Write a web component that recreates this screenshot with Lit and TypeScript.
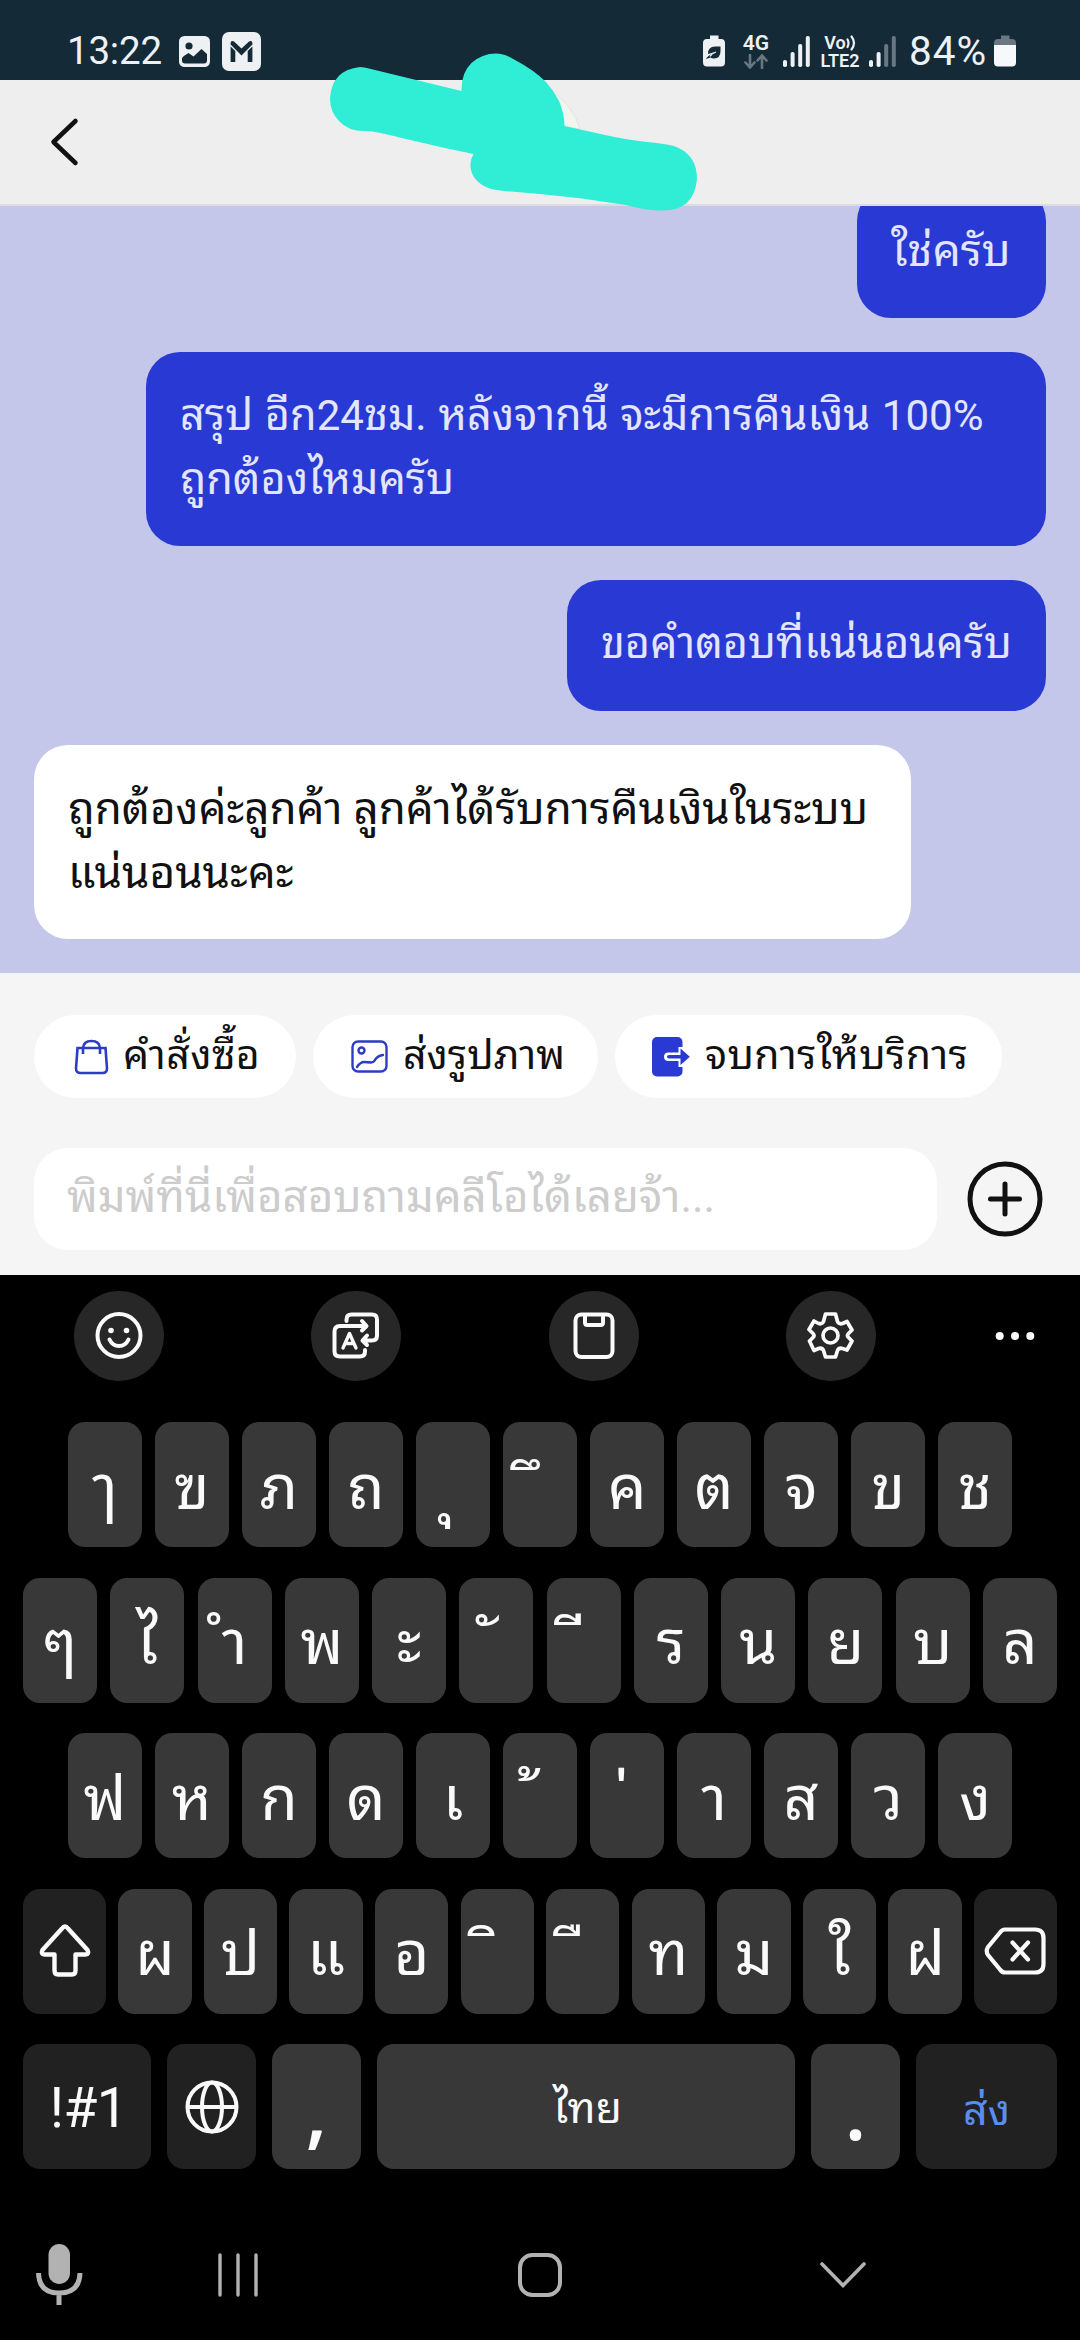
import { LitElement, html, css, svg, TemplateResult } from "lit";
import { customElement, property } from "lit/decorators.js";

type Key = { label?: string; icon?: TemplateResult; kind?: string };

const shiftIcon = html`<svg width="56" height="56" viewBox="0 0 56 56" fill="none" stroke="#fafafa" stroke-width="4.400" stroke-linejoin="round"><path d="M28 3.500Q29.500 3.500 31 5.500L50.500 27Q52.500 31.500 48.500 31.500H38.500V47.500Q38.500 51.500 35 51.500H21Q17.500 51.500 17.500 47.500V31.500H7.500Q3.500 31.500 5.500 27L25 5.500Q26.500 3.500 28 3.500Z"/></svg>`;
const backIcon = html`<svg width="64" height="52" viewBox="0 0 64 52" fill="none" stroke="#fafafa" stroke-width="4.200" stroke-linejoin="round" stroke-linecap="round"><path d="M22 4.500H52Q60.500 4.500 60.500 13V39Q60.500 47.500 52 47.500H22Q19 47.500 17 44.500L5 30Q2.500 26 5 22L17 7.500Q19 4.500 22 4.500Z"/><path d="M29.500 17.500L45 34.500M45 17.500L29.500 34.500"/></svg>`;
const globeIcon = html`<svg width="56" height="56" viewBox="0 0 56 56" fill="none" stroke="#fafafa" stroke-width="4"><circle cx="28" cy="28" r="24.500"/><ellipse cx="28" cy="28" rx="10" ry="24.500"/><path d="M4 28H52"/></svg>`;

@customElement("status-bar")
export class StatusBar extends LitElement {
  static styles = css`
    :host { display: flex; align-items: flex-start; justify-content: space-between; height: 80px; box-sizing: border-box; padding: 31px 64px 0 67px; background: #142a37; color: #eef1f4; font-family: Roboto, sans-serif; }
    .side { display: flex; align-items: flex-start; height: 46px; }
    .time { font-size: 38.5px; line-height: 40px; letter-spacing: -0.2px; width: 112px; }
    .image { margin-top: 5px; }
    .mail { margin: 1px 0 0 12px; }
    .pct { font-size: 40.5px; line-height: 40px; letter-spacing: 1px; width: 85px; margin-left: 11px; white-space: nowrap; }
    svg { display: block; flex: none; }
    .net { display: flex; flex-direction: column; align-items: center; width: 28px; font-weight: 600; font-size: 21px; line-height: 16px; margin: 4px 12px 0 17px; }
    .net svg { margin-top: 3px; }
    .lte { display: flex; flex-direction: column; align-items: center; width: 42px; font-weight: 600; font-size: 18px; line-height: 18px; margin: 3px 7px 0 7px; }
    .vo { display: flex; align-items: center; height: 18px; }
    .bars { margin-top: 5px; }
    .eco, .bat { margin-top: 4px; }
  `;
  bars(on: number) {
    return html`<svg class="bars" width="30" height="31" viewBox="0 0 30 31">${[[24, 7], [16, 15], [8, 23], [0, 31]].map(
      ([y, h], i) => svg`<rect x=${1 + i * 7.6} y=${y} width="4" height=${h} rx="1.800" fill=${i < on ? "#eef1f4" : "#687782"}/>`
    )}</svg>`;
  }
  render() {
    return html`
      <div class="side">
        <span class="time">13:22</span>
        <svg class="image" width="31" height="31" viewBox="0 0 31 31"><rect width="31" height="31" rx="5.500" fill="#eef1f4"/><circle cx="10" cy="10" r="3.600" fill="#142a37"/><path d="M3 22Q5 19.500 9.500 17L14.500 20.500L22.500 13L28 18V24.500Q28 27.500 25 27.500H6Q3 27.500 3 24.500Z" fill="#142a37"/></svg>
        <svg class="mail" width="39" height="39" viewBox="0 0 39 39"><rect width="39" height="39" rx="7" fill="#eef1f4"/><path d="M8.600 11Q8.600 9 10.500 9L12 9.500L19.500 16.500L27 9.500L28.500 9Q30.400 9 30.400 11V12.500L19.500 23.500L8.600 12.500Z" fill="#142a37"/><path d="M8.600 14.500L13.300 19V30H8.600ZM30.400 14.500L25.700 19V30H30.400Z" fill="#142a37"/></svg>
      </div>
      <div class="side">
        <svg class="eco" width="22" height="32" viewBox="0 0 22 32"><path d="M7 0.500H15.500V4H18Q22 4 22 8V27.500Q22 31.500 18 31.500H4Q0 31.500 0 27.500V8Q0 4 4 4H7Z" fill="#eef1f4"/><path d="M5 19Q5 11.500 12 11.500H17.500V16Q17.500 23.500 11 23.500Q8.500 23.500 7.500 22.500L3 24Q4 21 12 17" fill="#142a37"/><path d="M7 21.500Q8.500 18.500 13 17" stroke="#eef1f4" stroke-width="1.300" fill="none"/></svg>
        <div class="net">4G<svg width="24" height="15" viewBox="0 0 24 15" fill="none" stroke="#687782" stroke-width="2.600" stroke-linecap="round"><path d="M6 1V13M1.500 8.500L6 13.500L10.500 8.500M18 14V2M13.500 6.500L18 1.500L22.500 6.500"/></svg></div>
        ${this.bars(4)}
        <div class="lte"><span class="vo">Vo<svg width="10" height="16" viewBox="0 0 10 16" fill="none" stroke="#eef1f4" stroke-width="2.200" stroke-linecap="round"><path d="M1.500 4.500Q3.500 8 1.500 12M5.500 1.500Q10.500 8 5.500 14.500"/></svg></span><span>LTE2</span></div>
        ${this.bars(2)}
        <span class="pct">84%</span>
        <svg class="bat" width="22" height="32" viewBox="0 0 22 32"><path d="M7 0.500H15.500V4H18Q22 4 22 8V10H0V8Q0 4 4 4H7Z" fill="#687782"/><path d="M0 10H22V27.500Q22 31.500 18 31.500H4Q0 31.500 0 27.500Z" fill="#f7f8f9"/></svg>
      </div>`;
  }
}

@customElement("chat-bubble")
export class ChatBubble extends LitElement {
  @property({ type: Array }) lines: string[] = [];
  @property({ reflect: true }) side = "out";
  static styles = css`
    :host { display: block; flex: none; box-sizing: border-box; min-height: 131px; padding: 32px 34px 34px; border-radius: 34px; font-size: 43.2px; line-height: 64px; white-space: nowrap; }
    :host([side="out"]) { align-self: flex-end; background: #2939d3; color: #e2e5fc; }
    :host([side="in"]) { align-self: flex-start; background: #fff; color: #111; }
    .line { height: 64px; }
    .num { font-size: 42px; }
  `;
  render() {
    return this.lines.map(
      (l) => html`<div class="line">${l.split(/(\d+%?)/).map((part) => (/^\d/.test(part) ? html`<span class="num">${part}</span>` : part))}</div>`
    );
  }
}

@customElement("thai-keyboard")
export class ThaiKeyboard extends LitElement {
  static styles = css`
    :host { display: flex; flex-direction: column; height: 1065px; background: #000; color: #fafafa; font-family: Roboto, "Noto Sans Thai Looped", sans-serif; }
    svg { display: block; }
    .tools { display: grid; grid-template-columns: repeat(4, 237.5px) 130px; align-items: center; justify-items: center; height: 122px; margin-bottom: 25px; }
    .tool { display: flex; align-items: center; justify-content: center; width: 90px; height: 90px; border-radius: 50%; background: #272727; }
    .rows { display: flex; flex-direction: column; gap: 30.5px; }
    .row { display: flex; height: 125px; gap: 13.2px; padding: 0 68px; }
    .row.wide { padding: 0 23px; }
    .row.shift { padding: 0 23px; gap: 12.2px; }
    .row.bottom { padding: 0 23px; gap: 16px; }
    .key { flex: 1 1 0; min-width: 0; display: flex; align-items: center; justify-content: center; border-radius: 17px; background: #383838; font-size: 61px; line-height: 125px; white-space: pre; }
    .key span { padding-top: 7px; }
    .key.mark span { padding: 9px 0 0 5px; }
    .fn { background: #212121; }
    .mod { flex: 0 0 83px; }
    .key.sym { flex: 0 0 128px; font-size: 55px; letter-spacing: -0.5px; }
    .key.sym span { padding: 3px 0 0 3px; }
    .globe { flex: 0 0 89px; }
    .key.punct { flex: 0 0 89px; font-size: 80px; font-weight: 600; font-family: "Open Sans", sans-serif; }
    .key.punct span { padding-top: 4px; }
    .key.space { font-size: 43px; }
    .key.space span { padding: 3px 0 0 3px; }
    .key.send { flex: 0 0 141px; font-size: 43px; color: #5a8df2; }
    .nav { display: grid; grid-template-columns: 118px 240px 364px 242px; align-items: center; justify-items: center; margin-top: 47px; height: 118px; }
  `;
  thai(labels: string[]): Key[] {
    return labels.map((label) => ({ label, kind: /^[\u0e31\u0e34-\u0e3a\u0e47-\u0e4e]$/.test(label) ? "mark" : "" }));
  }
  rows: { cls: string; keys: Key[] }[] = [
    { cls: "", keys: this.thai(["ๅ", "ฃ", "ภ", "ถ", "ุ", "ึ", "ค", "ต", "จ", "ข", "ช"]) },
    { cls: "wide", keys: this.thai(["ๆ", "ไ", "ำ", "พ", "ะ", "ั", "ี", "ร", "น", "ย", "บ", "ล"]) },
    { cls: "", keys: this.thai(["ฟ", "ห", "ก", "ด", "เ", "้", "่", "า", "ส", "ว", "ง"]) },
    { cls: "shift", keys: [{ icon: shiftIcon, kind: "fn mod" }, ...this.thai(["ผ", "ป", "แ", "อ", "ิ", "ื", "ท", "ม", "ใ", "ฝ"]), { icon: backIcon, kind: "fn mod" }] },
    { cls: "bottom", keys: [{ label: "!#1", kind: "fn sym" }, { icon: globeIcon, kind: "fn globe" }, { label: ",", kind: "punct" }, { label: "ไทย", kind: "space" }, { label: ".", kind: "punct" }, { label: "ส่ง", kind: "fn send" }] },
  ];
  render() {
    return html`
      <div class="tools">
        <div class="tool"><svg width="48" height="48" viewBox="0 0 48 48" fill="none" stroke="#fafafa" stroke-width="4" stroke-linecap="round"><circle cx="24" cy="23.500" r="21.500"/><circle cx="16" cy="18.500" r="2.800" fill="#fafafa" stroke="none"/><circle cx="31.500" cy="18.500" r="2.800" fill="#fafafa" stroke="none"/><path d="M14.500 27.500Q17.500 34 24 34Q30.500 34 33.500 27.500"/></svg></div>
        <div class="tool"><svg width="48" height="48" viewBox="0 0 48 48" fill="none" stroke="#fafafa" stroke-width="4" stroke-linecap="round" stroke-linejoin="round"><path d="M14.500 9V7.500Q14.500 2.500 19.500 2.500H40Q45 2.500 45 7.500V23.500Q45 28.500 40 28.500H31M35 23.500L30.500 28.500L35 33M32 14H8Q2.500 14 2.500 19.500V39.500Q2.500 44.500 8 44.500H28Q33 44.500 33 39.500V38M30 9L34.500 14L30 18.500"/><path d="M11 36L17.500 21.500L24 36M14 31.500H21.500" stroke-width="3.400"/></svg></div>
        <div class="tool"><svg width="44" height="48" viewBox="0 0 44 48" fill="none" stroke="#fafafa" stroke-width="4"><rect x="3.500" y="2.500" width="37" height="42.500" rx="6"/><path d="M13 3V10.500Q13 13 15.500 13H28.500Q31 13 31 10.500V3"/></svg></div>
        <div class="tool"><svg width="48" height="48" viewBox="0 0 48 48" fill="none" stroke="#fafafa" stroke-width="3.700" stroke-linejoin="round"><path d="M18.500 2H28.500L30.500 9.500Q32 12.500 35.500 11.500L40 9.500L45 18L41.500 21.500Q39.500 23.500 41.500 25.500L45 29L40 38L35.500 36.500Q32 35.500 30.500 38.500L28.500 45H18.500L16.500 38.500Q15 35.500 11.500 36.500L7 38.500L2.500 29L6 25.500Q8 23.500 6 21.500L2 17.500L7 9L11.500 11.500Q15 12.500 16.500 9.500Z"/><circle cx="23.500" cy="23.500" r="7.500"/></svg></div>
        <svg width="40" height="10" viewBox="0 0 40 10" fill="#fafafa"><circle cx="4.700" cy="5" r="4"/><circle cx="20" cy="5" r="4"/><circle cx="35.300" cy="5" r="4"/></svg>
      </div>
      <div class="rows">
        ${this.rows.map((r) => html`<div class="row ${r.cls}">${r.keys.map((k) => html`<div class="key ${k.kind ?? ""}">${k.icon ?? html`<span>${k.label}</span>`}</div>`)}</div>`)}
      </div>
      <div class="nav">
        <svg width="48" height="64" viewBox="0 0 48 64"><rect x="13.500" y="1" width="21.500" height="40" rx="10.750" fill="#b2b2b2"/><path d="M3.500 30Q4 50 24 50Q44.500 50 45 30M24 50V62" fill="none" stroke="#b2b2b2" stroke-width="5"/></svg>
        <svg width="42" height="44" viewBox="0 0 42 44" stroke="#b2b2b2" stroke-width="3.400" stroke-linecap="round"><path d="M3 2V42M21 2V42M39 2V42"/></svg>
        <svg width="46" height="46" viewBox="0 0 46 46" fill="none" stroke="#b2b2b2" stroke-width="4"><rect x="3" y="3" width="40" height="40" rx="12.500"/></svg>
        <svg width="46" height="28" viewBox="0 0 46 28" fill="none" stroke="#b2b2b2" stroke-width="3.600" stroke-linecap="round"><path d="M2 3L23 24.500L44 3"/></svg>
      </div>`;
  }
}

@customElement("app-root")
export class AppRoot extends LitElement {
  static styles = css`
    :host { display: flex; flex-direction: column; position: relative; width: 1080px; height: 2340px; overflow: hidden; font-family: Roboto, "Noto Sans Thai Looped", sans-serif; }
    svg { display: block; flex: none; }
    .header { display: flex; align-items: center; box-sizing: border-box; height: 126px; padding: 0 49px; background: #eee; border-bottom: 2px solid #dcdce0; }
    .scribble { position: absolute; left: 320px; top: 40px; }
    .chat { display: flex; flex-direction: column; justify-content: flex-end; box-sizing: border-box; gap: 34px; height: 767px; padding: 0 34px 34px; overflow: hidden; background: #c4c7ea; }
    .confirm { width: 189px; font-size: 44.6px; }
    .summary { width: 900px; word-spacing: 1px; }
    .answer { width: 877px; font-size: 44px; }
    .panel { box-sizing: border-box; height: 302px; padding: 42px 34px 0; background: #f5f5f5; }
    .chips { display: flex; gap: 17px; }
    .chip { display: flex; align-items: center; box-sizing: border-box; height: 83px; border-radius: 42px; background: #fff; color: #111; font-size: 41px; line-height: 81px; white-space: nowrap; }
    .chip span { padding-bottom: 3px; }
    .orders { width: 262px; padding-left: 40px; gap: 14px; letter-spacing: 0.4px; }
    .photo { width: 285px; padding-left: 38px; gap: 15px; }
    .exit { width: 387px; padding-left: 37px; gap: 15px; letter-spacing: 0.4px; }
    .compose { display: flex; align-items: center; justify-content: space-between; margin: 50px 3px 0 0; }
    .input { box-sizing: border-box; width: 903px; height: 102px; padding-left: 33px; border-radius: 34px; background: #fff; color: #ccc; font-size: 43.8px; line-height: 98px; white-space: nowrap; }
  `;
  render() {
    return html`
      <status-bar></status-bar>
      <div class="header"><svg width="32" height="50" viewBox="0 0 32 50" fill="none" stroke="#111" stroke-width="4.500" stroke-linecap="round" stroke-linejoin="round"><path d="M26.500 4L4.500 25L26.500 46"/></svg></div>
      <div class="chat">
        <chat-bubble class="confirm" .lines=${["ใช่ครับ"]}></chat-bubble>
        <chat-bubble class="summary" .lines=${["สรุป อีก24ชม. หลังจากนี้ จะมีการคืนเงิน 100%", "ถูกต้องไหมครับ"]}></chat-bubble>
        <chat-bubble .lines=${["ขอคำตอบที่แน่นอนครับ"]}></chat-bubble>
        <chat-bubble class="answer" side="in" .lines=${["ถูกต้องค่ะลูกค้า ลูกค้าได้รับการคืนเงินในระบบ", "แน่นอนนะคะ"]}></chat-bubble>
      </div>
      <div class="panel">
        <div class="chips">
          <div class="chip orders"><svg width="35" height="36" viewBox="0 0 35 36" fill="none" stroke="#2d3cc4" stroke-width="2.600"><path d="M3.500 9H31.500L33 29.500Q33 34 28.500 34H6.500Q2 34 2 29.500ZM9 15V9Q9.500 2 17.500 2Q25.500 2 26 9V15"/></svg><span>คำสั่งซื้อ</span></div>
          <div class="chip photo"><svg width="37" height="33" viewBox="0 0 37 33" fill="none" stroke="#2d3cc4" stroke-width="2.400"><rect x="1.500" y="1.500" width="34" height="30" rx="5.500"/><circle cx="10.500" cy="10.500" r="3"/><path d="M6 27Q9.500 22 13 22Q18 22 20 22.500Q23 22.500 25 18.500Q27.500 15.500 32 15" stroke-linecap="round"/></svg><span>ส่งรูปภาพ</span></div>
          <div class="chip exit"><svg width="38" height="41" viewBox="0 0 38 41" fill="#2939d3"><rect x="0" y="1" width="30.500" height="39.500" rx="5"/><path d="M16.500 16.500H26.500V11H31V31H26.500V25H16.500Q12 25 12 20.750Q12 16.500 16.500 16.500Z" fill="#fff"/><path d="M17 19H28.500V12.500L37.800 20.750L28.500 29V22.500H17Q15 22.500 15 20.750Q15 19 17 19Z"/></svg><span>จบการให้บริการ</span></div>
        </div>
        <div class="compose">
          <div class="input">พิมพ์ที่นี่เพื่อสอบถามคลีโอได้เลยจ้า...</div>
          <svg width="76" height="76" viewBox="0 0 76 76" fill="none" stroke="#111" stroke-width="5" stroke-linecap="round"><circle cx="38" cy="38" r="35"/><path d="M38 23V53M23.500 38H52.500"/></svg>
        </div>
      </div>
      <thai-keyboard></thai-keyboard>
      <svg class="scribble" width="390" height="180" viewBox="320 40 390 180"><path d="M555 94Q573 106 580 129L560 126Z" fill="#f1f5ef" stroke="#d9dcd8" stroke-width="0.700"/><path d="M360 67Q364 67 375 70L461.500 91Q461 73 471.500 63Q482 53.500 496 53.500Q505 53.500 515 60Q534 70 546 82Q554 91 559 101Q564.500 114 564.500 126L605 135Q628 140 647 142Q663 143.500 674 146Q697 154 697 179Q694 210.500 663 210.500Q645 210.500 626 205L582 198.500L540 194L505 191Q490 190 484 186Q470 178 470.500 164Q471 158 473.500 154L445 148L406 139Q375 131 367 131Q349 132 339 121Q330 112 330 98Q332 70 360 67Z" fill="#30edd5"/></svg>`;
  }
}
